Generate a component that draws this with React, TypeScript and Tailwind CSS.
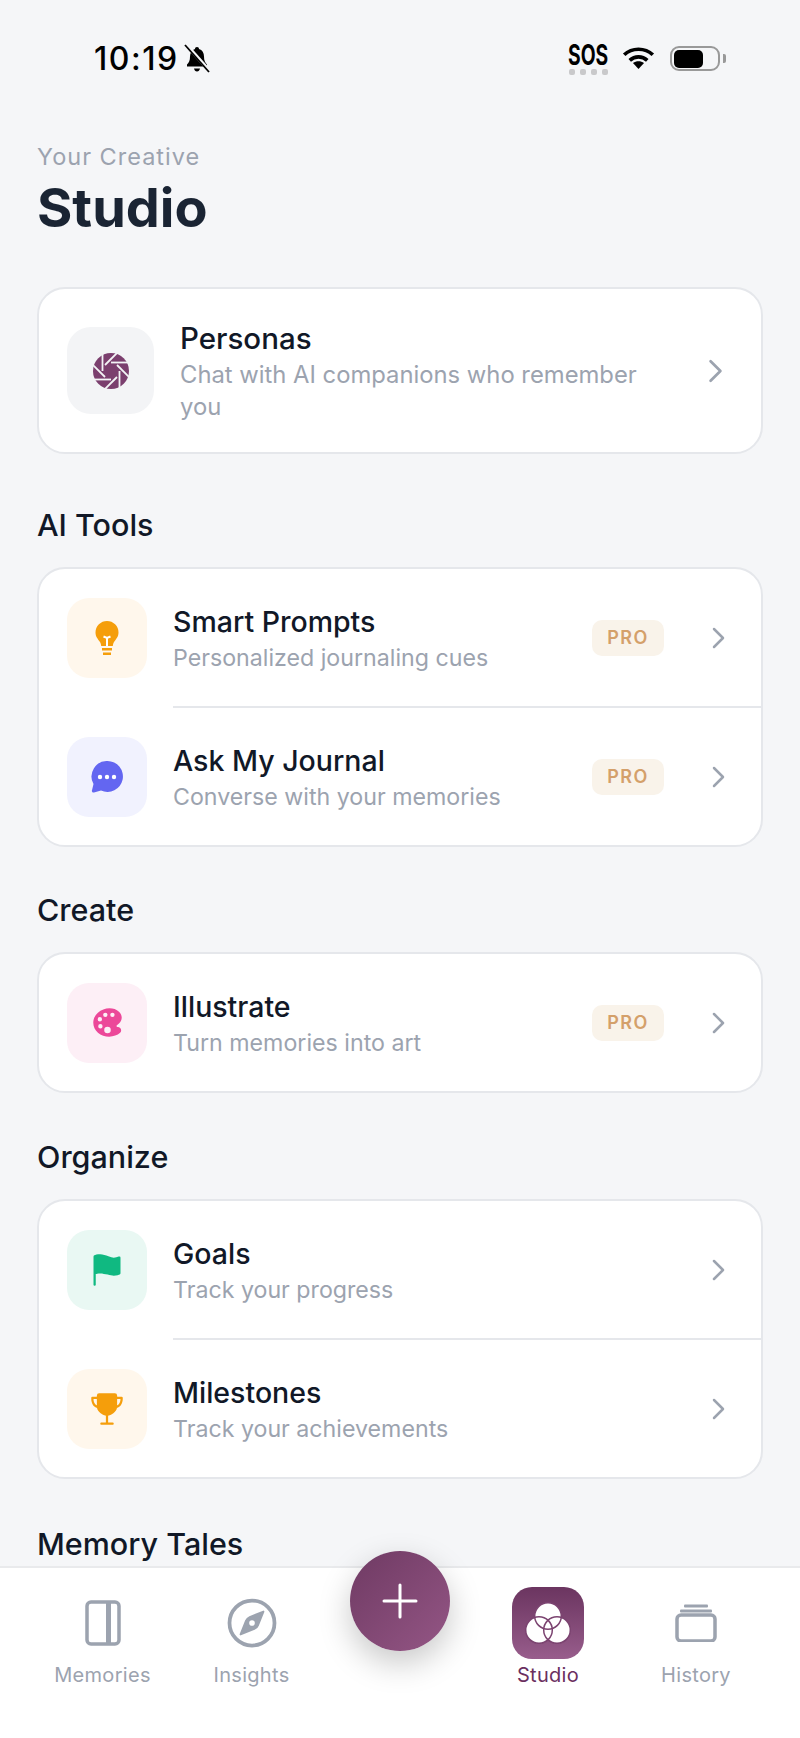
import { ReactNode } from 'react';
import { IoColorPalette, IoCompassOutline, IoFlag, IoTrophy } from 'react-icons/io5';

const BLADES = [0, 45, 90, 135, 180, 225, 270, 315];

function Chevron({ big }: { big?: boolean }) {
  return (
    <svg className="shrink-0" width={big ? 15 : 13} height={big ? 24 : 22} viewBox="0 0 13 22">
      <path d="M2 2l9 9-9 9" fill="none" stroke="#9ca3af" strokeWidth="2.5" strokeLinecap="round" strokeLinejoin="round" />
    </svg>
  );
}

function ApertureIcon() {
  return (
    <svg width="38" height="38" viewBox="0 0 38 38">
      <circle cx="19" cy="19" r="18" fill="#7b3f6e" />
      {BLADES.map((a) => (
        <path key={a} d="M19 10.500H38" stroke="#f3f4f6" strokeWidth="1.800" transform={`rotate(${a} 19 19)`} />
      ))}
    </svg>
  );
}

function BulbIcon() {
  return (
    <svg width="24" height="34" viewBox="0 0 24 34">
      <path
        d="M12 0a11.500 11.500 0 0 1 11.500 11.500c0 4.500-2.500 6.500-4.500 9.500-.8 1.300-1 2.500-1.200 4H6.200c-.2-1.500-.4-2.700-1.200-4C3 18 .5 16 .5 11.500A11.500 11.500 0 0 1 12 0z"
        fill="#f59e0b"
      />
      <path d="M8.500 15.500L12 17l3.500-1.500M12 17v8" fill="none" stroke="#fff" strokeWidth="2" />
      <rect x="7" y="27" width="10" height="2.500" fill="#f59e0b" />
      <rect x="8" y="31.500" width="8" height="2.500" fill="#f59e0b" />
    </svg>
  );
}

function ChatIcon() {
  return (
    <svg width="32" height="32" viewBox="0 0 32 32">
      <path
        d="M16.500 0a15.500 15.500 0 1 1-6.500 29.600L3 31.500c-1.500.4-2.500-.8-2-2.200L2.500 23A15.500 15.500 0 0 1 16.500 0z"
        fill="#6366f1"
      />
      <circle cx="9" cy="16" r="2.200" fill="#fff" />
      <circle cx="16" cy="16" r="2.200" fill="#fff" />
      <circle cx="23" cy="16" r="2.200" fill="#fff" />
    </svg>
  );
}

function ToolRow({
  icon,
  iconBg,
  title,
  subtitle,
  pro,
}: {
  icon: ReactNode;
  iconBg: string;
  title: string;
  subtitle: string;
  pro?: boolean;
}) {
  return (
    <div className="flex h-[137px] items-center pl-[28px] pr-[36px]">
      <div className={`flex h-[80px] w-[80px] shrink-0 items-center justify-center rounded-[22px] ${iconBg}`}>
        {icon}
      </div>
      <div className="ml-[26px] flex-1 pt-[2px]">
        <div className="text-[28.5px] leading-[36px] font-medium text-[#111827]">{title}</div>
        <div className="mt-[2px] text-[23.2px] leading-[32px] text-[#9ca3af]">{subtitle}</div>
      </div>
      {pro && (
        <div className="mr-[48px] flex h-[36px] w-[72px] items-center justify-center rounded-[10px] bg-[#f9f3ea] text-[18px] font-semibold tracking-[1.5px] text-[#d4a06a]">
          PRO
        </div>
      )}
      <Chevron />
    </div>
  );
}

function Card({ children }: { children: ReactNode }) {
  return <div className="rounded-[28px] border-2 border-[#e5e7eb] bg-white">{children}</div>;
}

function SectionTitle({ children, className }: { children: ReactNode; className: string }) {
  return <h2 className={`mb-[24px] text-[30.5px] leading-[36px] font-medium text-[#111827] ${className}`}>{children}</h2>;
}

function Divider() {
  return <div className="ml-[134px] h-[2px] bg-[#e5e7eb]" />;
}

function NavItem({ icon, label, active }: { icon: ReactNode; label: string; active?: boolean }) {
  return (
    <div className="flex flex-col items-center">
      <div className="flex h-[72px] items-center justify-center">{icon}</div>
      <div className={`mt-[2px] text-[20px] leading-[28px] tracking-[0.3px] ${active ? 'text-[#6b2f5f]' : 'text-[#9ca3af]'}`}>
        {label}
      </div>
    </div>
  );
}

function StatusBar() {
  return (
    <div className="flex h-[130px] items-start justify-between pl-[94px] pr-[74px] pt-[40px]">
      <div className="flex items-center gap-[5px]">
        <span className="text-[32px] leading-[38px] font-medium tracking-[1.5px] text-black">10:19</span>
        <svg width="26" height="30" viewBox="0 0 26 28">
          <path
            d="M13 2c1.300 0 2 .9 2 2 3.400 1 5 3.800 5 7.500 0 4 1 6 3 8v2H3v-2c2-2 3-4 3-8C6 7.800 8 5 11 4c0-1.100.7-2 2-2z"
            fill="#000"
          />
          <path d="M10 23.500h6c-.4 1.800-1.500 3-3 3s-2.600-1.200-3-3z" fill="#000" />
          <path d="M2.500 0l24 27" stroke="#f5f6f8" strokeWidth="3.500" />
          <path d="M1 0l24 27" stroke="#000" strokeWidth="1.800" />
        </svg>
      </div>
      <div className="flex items-start">
        <div className="flex w-[40px] flex-col items-center">
          <span className="inline-block scale-x-[0.69] text-[28px] leading-[30px] font-bold text-black">SOS</span>
          <div className="-mt-[1px] flex gap-[5px]">
            <span className="h-[6px] w-[6px] rounded-[2px] bg-[#c9c9cb]" />
            <span className="h-[6px] w-[6px] rounded-[2px] bg-[#c9c9cb]" />
            <span className="h-[6px] w-[6px] rounded-[2px] bg-[#c9c9cb]" />
            <span className="h-[6px] w-[6px] rounded-[2px] bg-[#c9c9cb]" />
          </div>
        </div>
        <svg className="ml-[14px] mt-[6px]" width="33" height="24" viewBox="0 0 35 26">
          <path d="M2 9.500C10.500 1.500 24.500 1.500 33 9.500" fill="none" stroke="#000" strokeWidth="4" />
          <path d="M8 15.500C13.500 10.500 21.500 10.500 27 15.500" fill="none" stroke="#000" strokeWidth="4" />
          <path d="M17.500 25l-6-6.500c3.500-2.700 8.500-2.700 12 0z" fill="#000" />
        </svg>
        <div className="ml-[15px] mt-[6px] flex items-center">
          <div className="h-[25px] w-[50px] rounded-[9px] border-2 border-[#999999] p-[1.5px]">
            <div className="h-full w-[29px] rounded-[5px] bg-black" />
          </div>
          <div className="ml-[3px] h-[9px] w-[3px] rounded-r-[2px] bg-[#999999]" />
        </div>
      </div>
    </div>
  );
}

export default function App() {
  return (
    <div className="relative flex h-[1738px] w-[800px] flex-col overflow-hidden bg-[#f5f6f8] font-[family-name:Inter,sans-serif]">
      <StatusBar />
      <main className="flex-1 overflow-hidden px-[37px]">
        <div className="mt-[11px] text-[23.5px] leading-[32px] tracking-[1px] text-[#9ca3af]">Your Creative</div>
        <h1 className="mt-[5px] text-[54px] leading-[60px] font-bold text-[#1a2433]">Studio</h1>

        <div className="mt-[49px]">
          <Card>
            <div className="flex h-[163px] items-center pl-[28px] pr-[38px]">
              <div className="flex h-[87px] w-[87px] shrink-0 items-center justify-center rounded-[24px] bg-[#f3f4f6]">
                <ApertureIcon />
              </div>
              <div className="ml-[26px] flex-1 pr-[40px]">
                <div className="text-[29.5px] leading-[38px] font-medium text-[#111827]">Personas</div>
                <div className="mt-[2px] text-[23.8px] leading-[32px] text-[#9ca3af]">
                  Chat with AI companions who remember you
                </div>
              </div>
              <Chevron big />
            </div>
          </Card>
        </div>

        <SectionTitle className="mt-[53px]">AI Tools</SectionTitle>
        <Card>
          <ToolRow
            icon={<BulbIcon />}
            iconBg="bg-[#fff7ec]"
            title="Smart Prompts"
            subtitle="Personalized journaling cues"
            pro
          />
          <Divider />
          <ToolRow
            icon={<ChatIcon />}
            iconBg="bg-[#f1f2fe]"
            title="Ask My Journal"
            subtitle="Converse with your memories"
            pro
          />
        </Card>

        <SectionTitle className="mt-[45px]">Create</SectionTitle>
        <Card>
          <ToolRow
            icon={<IoColorPalette className="text-[#ec4899]" size={35} />}
            iconBg="bg-[#fdeff6]"
            title="Illustrate"
            subtitle="Turn memories into art"
            pro
          />
        </Card>

        <SectionTitle className="mt-[46px]">Organize</SectionTitle>
        <Card>
          <ToolRow
            icon={<IoFlag className="text-[#10b981]" size={36} />}
            iconBg="bg-[#e9f8f3]"
            title="Goals"
            subtitle="Track your progress"
          />
          <Divider />
          <ToolRow
            icon={<IoTrophy className="text-[#f59e0b]" size={36} />}
            iconBg="bg-[#fff7ec]"
            title="Milestones"
            subtitle="Track your achievements"
          />
        </Card>

        <SectionTitle className="mt-[47px]">Memory Tales</SectionTitle>
      </main>

      <nav className="grid h-[172px] grid-cols-[149px_149px_149px_146px_150px] border-t-2 border-[#e9eaec] bg-white pl-[28px] pt-[19px]">
        <NavItem
          label="Memories"
          icon={
            <svg width="36" height="46" viewBox="0 0 36 46">
              <rect x="2" y="2" width="32" height="42" rx="4" fill="none" stroke="#9ca3af" strokeWidth="3.500" />
              <rect x="21" y="2" width="5" height="42" fill="#9ca3af" />
            </svg>
          }
        />
        <NavItem label="Insights" icon={<IoCompassOutline className="text-[#9ca3af]" size={60} />} />
        <div />
        <NavItem
          active
          label="Studio"
          icon={
            <div className="flex h-[72px] w-[72px] items-center justify-center rounded-[20px] bg-gradient-to-b from-[#6b3560] to-[#985d8c]">
              <svg width="46" height="42" viewBox="0 0 46 42">
                <g fill="#fff">
                  <circle cx="23" cy="14" r="13.300" />
                  <circle cx="14" cy="28" r="13.300" />
                  <circle cx="32" cy="28" r="13.300" />
                </g>
                <g fill="none" stroke="#7b4370" strokeWidth="1.500">
                  <circle cx="23" cy="14" r="13.300" />
                  <circle cx="14" cy="28" r="13.300" />
                  <circle cx="32" cy="28" r="13.300" />
                </g>
              </svg>
            </div>
          }
        />
        <NavItem
          label="History"
          icon={
            <svg width="42" height="38" viewBox="0 0 42 38">
              <rect x="2" y="11" width="38" height="26" rx="4" fill="none" stroke="#9ca3af" strokeWidth="3.500" />
              <rect x="5" y="5.500" width="32" height="3" rx="1" fill="#9ca3af" />
              <rect x="9" y="0.500" width="24" height="3" rx="1" fill="#9ca3af" />
            </svg>
          }
        />
      </nav>

      <button className="absolute left-[350px] top-[1551px] flex h-[100px] w-[100px] items-center justify-center rounded-full bg-gradient-to-br from-[#6f3a63] to-[#945685] shadow-[0_12px_32px_rgba(0,0,0,0.22)]">
        <svg width="36" height="36" viewBox="0 0 36 36">
          <path d="M18 2v32M2 18h32" stroke="#fff" strokeWidth="3" strokeLinecap="round" />
        </svg>
      </button>
    </div>
  );
}
